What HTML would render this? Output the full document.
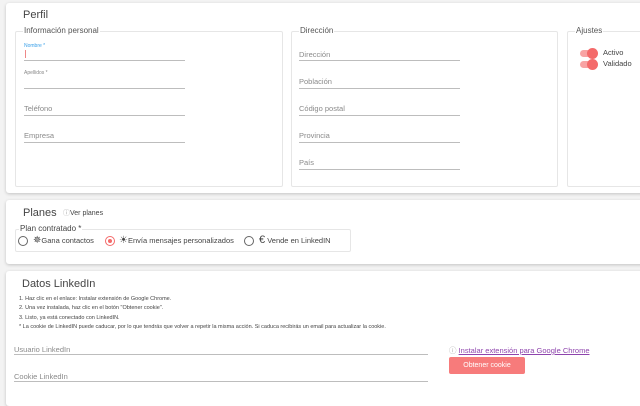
<!DOCTYPE html>
<html><head><meta charset="utf-8"><style>
*{box-sizing:border-box;margin:0;padding:0}
body{width:640px;height:400px;overflow:hidden;background:#f3f3f3;font-family:"Liberation Sans",sans-serif;position:relative;color:#333}
.card{position:absolute;background:#fff;box-shadow:0 1px 3px rgba(0,0,0,.2);border-radius:3px}
.abs{position:absolute}
.fs{position:absolute;border:1px solid #e6e6e6;border-radius:2px}
.leg{position:absolute;top:-6px;background:#fff;font-size:8px;color:#555;padding:0 1px}
.line{position:absolute;height:1px;background:#bdbdbd;width:161px}
.ph{position:absolute;font-size:7.5px;color:#8a8a8a}
.tg{position:absolute;width:17px;height:7px;border-radius:4px;background:#f8a4a4}
.tg::after{content:"";position:absolute;right:-1px;top:-2px;width:11px;height:11px;border-radius:50%;background:#f46a6a}
.radio{position:absolute;width:10px;height:10px;border:1px solid #666;border-radius:50%}
.t{position:absolute;font-size:7.5px;color:#444;white-space:nowrap}
</style></head><body>
<div class="card" style="left:6px;top:3px;width:640px;height:190px"></div>
<div class="abs" style="left:23px;top:9px;font-size:11px;color:#444">Perfil</div>
<div class="fs" style="left:15px;top:31px;width:268px;height:156px"><span class="leg" style="left:7px">Información personal</span></div>
<div class="abs" style="left:24px;top:43px;font-size:5px;color:#3aa0e8">Nombre *</div>
<div class="abs" style="left:25px;top:50px;width:1px;height:8px;background:#e88"></div>
<div class="line" style="left:24px;top:60px"></div>
<div class="abs" style="left:24px;top:70px;font-size:5px;color:#888">Apellidos *</div>
<div class="line" style="left:24px;top:88px"></div>
<div class="ph" style="left:24px;top:104px">Teléfono</div>
<div class="line" style="left:24px;top:115px"></div>
<div class="ph" style="left:24px;top:131px">Empresa</div>
<div class="line" style="left:24px;top:142px"></div>

<div class="fs" style="left:291px;top:31px;width:267px;height:156px"><span class="leg" style="left:7px">Dirección</span></div>
<div class="ph" style="left:299px;top:50px">Dirección</div><div class="line" style="left:299px;top:60px"></div>
<div class="ph" style="left:299px;top:77px">Población</div><div class="line" style="left:299px;top:88px"></div>
<div class="ph" style="left:299px;top:104px">Código postal</div><div class="line" style="left:299px;top:115px"></div>
<div class="ph" style="left:299px;top:131px">Provincia</div><div class="line" style="left:299px;top:142px"></div>
<div class="ph" style="left:299px;top:158px">País</div><div class="line" style="left:299px;top:169px"></div>

<div class="fs" style="left:567px;top:31px;width:90px;height:156px"><span class="leg" style="left:7px">Ajustes</span></div>
<div class="tg" style="left:580px;top:50px"></div><div class="t" style="left:603px;top:48px">Activo</div>
<div class="tg" style="left:580px;top:61px"></div><div class="t" style="left:603px;top:59px">Validado</div>

<div class="card" style="left:6px;top:200px;width:640px;height:64px"></div>
<div class="abs" style="left:23px;top:207px;font-size:11px;color:#444">Planes</div>
<div class="t" style="left:63px;top:208px;font-size:7px"><span style="color:#aaa">ⓘ</span>Ver planes</div>
<div class="fs" style="left:15px;top:229px;width:336px;height:23px"><span class="leg" style="left:3px;color:#444">Plan contratado *</span></div>
<div class="radio" style="left:18px;top:236px"></div>
<div class="t" style="left:33px;top:235px"><span style="font-size:10px">✵</span>Gana contactos</div>
<div class="radio" style="left:105px;top:236px;border-color:#f46a6a"><div style="position:absolute;left:2px;top:2px;width:4px;height:4px;border-radius:50%;background:#f46a6a"></div></div>
<div class="t" style="left:119px;top:235px"><span style="font-size:10px">☀</span>Envía mensajes personalizados</div>
<div class="radio" style="left:244px;top:236px"></div>
<div class="t" style="left:259px;top:234px"><span style="font-size:11px">€</span> Vende en LinkedIN</div>

<div class="card" style="left:6px;top:271px;width:640px;height:135px"></div>
<div class="abs" style="left:22px;top:278px;font-size:11px;color:#444">Datos LinkedIn</div>
<div class="t" style="left:19px;top:295px;font-size:5.5px;line-height:9.3px">1. Haz clic en el enlace: Instalar extensión de Google Chrome.<br>2. Una vez instalada, haz clic en el botón "Obtener cookie".<br>3. Listo, ya está conectado con LinkedIN.<br>* La cookie de LinkedIN puede caducar, por lo que tendrás que volver a repetir la misma acción. Si caduca recibirás un email para actualizar la cookie.</div>
<div class="ph" style="left:14px;top:345px">Usuario LinkedIn</div><div class="line" style="left:14px;top:354px;width:414px"></div>
<div class="ph" style="left:14px;top:372px">Cookie LinkedIn</div><div class="line" style="left:14px;top:381px;width:414px"></div>
<div class="t" style="left:449px;top:345px"><span style="color:#aaa">ⓘ</span> <span style="color:#8e44ad;text-decoration:underline">Instalar extensión para Google Chrome</span></div>
<div class="abs" style="left:449px;top:357px;width:76px;height:17px;background:#f77b7b;border-radius:2px;color:#fff;font-size:7px;text-align:center;line-height:17px">Obtener cookie</div>
</body></html>
